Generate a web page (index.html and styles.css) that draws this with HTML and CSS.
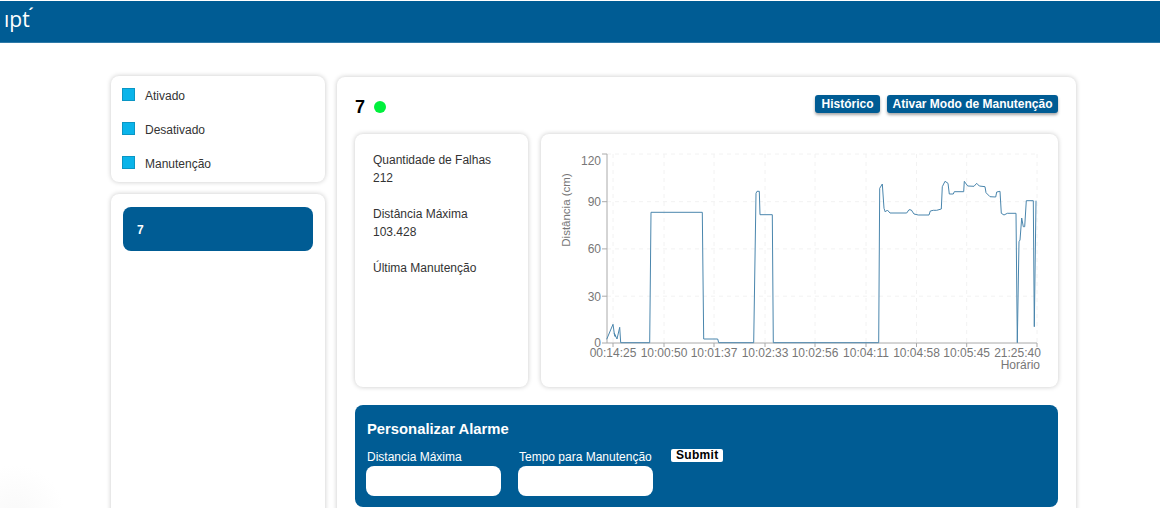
FILE: index.html
```html
<!DOCTYPE html>
<html lang="pt">
<head>
    <meta charset="UTF-8">
    <meta name="viewport" content="width=device-width, initial-scale=1.0">
    <title>Sensores</title>
    <link rel="stylesheet" href="styles.css">
</head>
<body>
    <header class="topbar">
        <span class="logo">ıpt<span class="logo-accent">´</span></span>
    </header>
    <div class="page">
        <aside class="sidebar">
            <div class="card legend">
                <div class="legend-item"><span class="swatch"></span>Ativado</div>
                <div class="legend-item"><span class="swatch"></span>Desativado</div>
                <div class="legend-item"><span class="swatch"></span>Manutenção</div>
            </div>
            <div class="card sensor-list">
                <div class="sensor-item">7</div>
            </div>
        </aside>
        <main class="card detail">
            <div class="detail-head">
                <h2 class="detail-title">7</h2>
                <span class="status-dot"></span>
                <div class="actions">
                    <button class="action">Histórico</button>
                    <button class="action action-wide">Ativar Modo de Manutenção</button>
                </div>
            </div>
            <div class="detail-row">
                <div class="card stats">
                    <p>Quantidade de Falhas<br>212</p>
                    <p>Distância Máxima<br>103.428</p>
                    <p>Última Manutenção</p>
                </div>
                <div class="card chart">
                    <svg class="chart-svg" viewBox="541 134 517 253" width="517" height="253">
                        <g class="grid">
                            <path d="M607 154H1037M607 201.700H1037M607 248.900H1037M607 296.200H1037"/>
                            <path d="M613 154V343M664 154V343M714 154V343M765 154V343M815 154V343M866 154V343M916.500 154V343M966.700 154V343M1037 154V343"/>
                        </g>
                        <path class="axis" d="M602 154H607V343H1037M602 201.700H607M602 248.900H607M602 296.200H607M602 343H607M613 343V347M664 343V347M714 343V347M765 343V347M815 343V347M866 343V347M916.500 343V347M966.700 343V347M1037 343V347"/>
                        <path class="line" d="M606.700 339.300L613 324.300L614.500 335L615.300 336.700L614.300 333.300L617 339L619.700 327.300L620.700 342.700H649.700L651 212.300H702.300L703.700 339H717.700L718.700 342.700H753.700L756 193.300L757 191.300H759.300L760 214.700H772.300L773.300 342.700H878.700L879.700 188.300L882.300 184L884 208.300L885.300 212L887.300 210L890 213H906.700L909 209.700L911.300 210L914 214L918.300 215H929L930.300 211L933.300 210.300H936.700L941.300 209L942.300 186.700L945 181.300L948 183.300L949.300 194H953.300L954.300 191.700H963.700L964.300 181.300L967.700 186L974 186.300L976.700 183.300L979.300 186L985 186.700L986 192.700L990 196.700L995.700 197L996.700 192L1000 191.300L1001.300 213.300L1004 215L1007.300 213.300H1016L1017.300 342.700L1019 241.700L1020 240L1021.700 218L1023.300 226.700H1024.700L1026.300 200.700H1033.300L1034.300 326.700L1036 200.700"/>
                        <g class="y-labels">
                            <text x="601" y="164.500">120</text>
                            <text x="601" y="206">90</text>
                            <text x="601" y="253">60</text>
                            <text x="601" y="300.500">30</text>
                            <text x="601" y="347">0</text>
                        </g>
                        <text class="y-title" transform="translate(570 210) rotate(-90)">Distância (cm)</text>
                        <g class="x-labels">
                            <text x="613" y="357">00:14:25</text>
                            <text x="664" y="357">10:00:50</text>
                            <text x="714" y="357">10:01:37</text>
                            <text x="765" y="357">10:02:33</text>
                            <text x="815" y="357">10:02:56</text>
                            <text x="866" y="357">10:04:11</text>
                            <text x="916.500" y="357">10:04:58</text>
                            <text x="966.700" y="357">10:05:45</text>
                            <text x="1017.500" y="357">21:25:40</text>
                        </g>
                        <text class="x-title" x="1040" y="369">Horário</text>
                    </svg>
                </div>
            </div>
            <form class="alarm">
                <h3 class="alarm-title">Personalizar Alarme</h3>
                <div class="alarm-fields">
                    <label class="field">Distancia Máxima<input class="field-input" type="text"></label>
                    <label class="field">Tempo para Manutenção<input class="field-input" type="text"></label>
                    <button class="submit" type="button">Submit</button>
                </div>
            </form>
        </main>
    </div>
</body>
</html>
```

FILE: styles.css
```css
* {
    box-sizing: border-box;
}
html, body {
    height: 100%;
}
body {
    margin: 0;
    overflow: hidden;
    font-family: "Liberation Sans", Arial, sans-serif;
    color: #333;
    background: radial-gradient(circle at 15px 515px, #f9f9f9, #fff 50px);
}
.topbar {
    height: 42px;
    margin-top: 1px;
    background: #005c94;
    border-bottom: 1px solid #2f7aa8;
    padding-left: 4px;
}
.logo {
    position: relative;
    display: inline-block;
    color: #fff;
    font-family: "Open Sans", sans-serif;
    font-size: 21px;
    line-height: 36px;
}
.logo-accent {
    position: absolute;
    top: -5px;
    right: -4px;
    font-size: 14px;
    font-weight: bold;
}
.page {
    display: grid;
    grid-template-columns: 214px 739px;
    column-gap: 12px;
    padding: 33px 0 0 111px;
}
.card {
    background: #fff;
    border-radius: 8px;
    box-shadow: 0 0 5px rgba(0, 0, 0, 0.22);
}
.sidebar {
    display: flex;
    flex-direction: column;
    gap: 12px;
}
.legend {
    height: 106px;
    padding: 13px 11px;
    display: flex;
    flex-direction: column;
    gap: 21px;
}
.legend-item {
    display: flex;
    align-items: center;
    gap: 10px;
    height: 13px;
    font-size: 12px;
}
.swatch {
    width: 13px;
    height: 13px;
    margin-top: -3px;
    background: #0ab4ea;
    border: 1px solid #0a96c4;
}
.sensor-list {
    height: 400px;
    padding: 13px 12px;
}
.sensor-item {
    height: 44px;
    padding-left: 14px;
    line-height: 46px;
    border-radius: 8px;
    background: #005c94;
    color: #fff;
    font-size: 12px;
    font-weight: bold;
}
.detail {
    height: 500px;
    padding: 0 18px;
    margin-top: 1px;
}
.detail-head {
    display: flex;
    align-items: center;
    height: 57px;
    padding-top: 3px;
}
.detail-title {
    margin: 0;
    font-size: 18px;
    color: #000;
}
.status-dot {
    width: 12px;
    height: 12px;
    margin-left: 9px;
    border-radius: 50%;
    background: #00f03c;
}
.actions {
    display: flex;
    gap: 7px;
    margin-left: auto;
    margin-top: -6px;
}
.action {
    height: 18px;
    padding: 0 6.500px;
    border: none;
    border-radius: 3px;
    background: #005c94;
    color: #fff;
    font-family: inherit;
    font-size: 12px;
    font-weight: bold;
    box-shadow: 0 2px 3px rgba(0, 0, 0, 0.35);
}
.action-wide {
    padding: 0 5.500px;
}
.detail-row {
    display: flex;
    gap: 13px;
}
.stats {
    width: 173px;
    height: 253px;
    padding: 17px 18px;
    font-size: 12px;
    line-height: 18px;
}
.stats p {
    margin: 0 0 18px;
}
.chart {
    width: 517px;
    height: 253px;
}
.chart-svg {
    display: block;
}
.grid path {
    fill: none;
    stroke: #f2f2f2;
    stroke-dasharray: 4 4;
}
.axis {
    fill: none;
    stroke: #aaa;
}
.line {
    fill: none;
    stroke: #4a86ad;
    stroke-width: 1;
}
.chart-svg text {
    font-family: "Liberation Sans", Arial, sans-serif;
    font-size: 12px;
    fill: #777;
}
.chart-svg .y-title {
    font-size: 11.500px;
    text-anchor: middle;
}
.y-labels text {
    text-anchor: end;
}
.x-labels text {
    text-anchor: middle;
}
.x-title {
    text-anchor: end;
}
.alarm {
    height: 102px;
    margin-top: 18px;
    padding: 15px 12px;
    border-radius: 8px;
    background: #005c94;
    color: #fff;
}
.alarm-title {
    margin: 0;
    font-size: 14.800px;
    line-height: 18px;
}
.alarm-fields {
    display: flex;
    gap: 17px;
    margin-top: 12px;
}
.field {
    display: flex;
    flex-direction: column;
    width: 135px;
    font-size: 12px;
    line-height: 14px;
    white-space: nowrap;
}
.field-input {
    width: 135px;
    height: 30px;
    margin: 2px 0 0 -1px;
    border: none;
    border-radius: 8px;
    background: #fff;
}
.submit {
    height: 13px;
    padding: 0 5px;
    margin-top: -1px;
    border: none;
    border-radius: 2px;
    background: #fff;
    color: #000;
    font-family: inherit;
    font-size: 12px;
    font-weight: bold;
    letter-spacing: 0.3px;
    line-height: 13px;
}
```
